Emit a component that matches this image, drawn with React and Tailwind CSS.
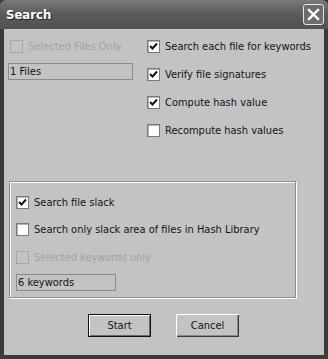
import React from "react";

function Box({ checked, disabled }) {
  return (
    <span
      className={
        "relative inline-block w-[13px] h-[13px] shrink-0 border " +
        (disabled
          ? "border-[#a6a6a6] bg-[#c3c3c3]"
          : "border-[#7a7a7a] bg-white shadow-[inset_1px_1px_0_#b5b5b5]")
      }
    >
      {checked && (
        <svg className="absolute left-[1px] top-[1px]" width="9" height="9" viewBox="0 0 9 9">
          <path d="M1 4 L3.5 6.5 L8 1.5" fill="none" stroke="#111" strokeWidth="1.9" />
        </svg>
      )}
    </span>
  );
}

function Check({ label, checked, disabled }) {
  return (
    <div className="flex items-center gap-[5px]">
      <Box checked={checked} disabled={disabled} />
      <span className={disabled ? "text-[#a2a2a2]" : "text-[#141414]"}>{label}</span>
    </div>
  );
}

export default function App() {
  return (
    <div
      className="w-[328px] h-[359px] bg-[#3a3a3a] flex flex-col overflow-hidden text-[11px] leading-none font-stretch-condensed"
      style={{ fontFamily: "'DejaVu Sans Condensed', 'DejaVu Sans', sans-serif" }}
    >
      {/* title bar */}
      <div className="h-[29px] shrink-0 flex items-center justify-between pl-[6px] pr-[4px] bg-gradient-to-b from-[#7a7a7a] via-[#5a5a5a] to-[#525252] rounded-t-[6px]">
        <span className="text-white font-bold text-[13px] [text-shadow:1px_1px_0_#222]">Search</span>
        <div className="w-[21px] h-[21px] border border-[#e8e8e8] rounded-[3px] bg-[#6c6c6c] flex items-center justify-center">
          <svg width="13" height="13" viewBox="0 0 13 13">
            <path d="M2 2 L11 11 M11 2 L2 11" stroke="#fff" strokeWidth="2.4" strokeLinecap="square" />
          </svg>
        </div>
      </div>
      {/* body */}
      <div className="flex-1 mx-[4px] mb-[4px] bg-[#c3c3c3] flex flex-col">
        {/* top section */}
        <div className="flex pt-[3px]">
          <div className="w-[125px] ml-[4px] flex flex-col">
            <div className="h-[28px] flex items-center pl-[2px]">
              <Check label="Selected Files Only" disabled />
            </div>
            <div className="mt-[3px] h-[17px] border border-[#8c8c8c] flex items-center pl-[1px] text-[#141414]">
              1 Files
            </div>
          </div>
          <div className="ml-[14px] flex flex-col">
            <div className="h-[28px] flex items-center">
              <Check label="Search each file for keywords" checked />
            </div>
            <div className="h-[28px] flex items-center">
              <Check label="Verify file signatures" checked />
            </div>
            <div className="h-[28px] flex items-center">
              <Check label="Compute hash value" checked />
            </div>
            <div className="h-[28px] flex items-center">
              <Check label="Recompute hash values" />
            </div>
          </div>
        </div>
        {/* group box */}
        <div className="ml-[5px] mt-[37px] w-[287px] h-[117px] border border-[#8e8e8e] shadow-[inset_1px_1px_0_#fff,1px_1px_0_#fff] flex flex-col px-[6px] pt-[6px]">
          <div className="h-[28px] flex items-center">
            <Check label="Search file slack" checked />
          </div>
          <div className="h-[27px] flex items-center">
            <Check label="Search only slack area of files in Hash Library" />
          </div>
          <div className="h-[28px] flex items-center">
            <Check label="Selected keywords only" disabled />
          </div>
          <div className="mt-[3px] w-[100px] h-[17px] border border-[#8c8c8c] flex items-center pl-[1px] text-[#141414]">
            6 keywords
          </div>
        </div>
        {/* buttons */}
        <div className="flex ml-[84px] mt-[16px] gap-[25px]">
          <button className="w-[63px] h-[23px] border border-[#111] bg-[#c3c3c3] shadow-[inset_1px_1px_0_#fff,inset_-1px_-1px_0_#6a6a6a] text-[#141414] text-[11px]">
            Start
          </button>
          <button className="w-[63px] h-[23px] bg-[#c3c3c3] shadow-[inset_1px_1px_0_#fff,inset_-1px_-1px_0_#3a3a3a,inset_-2px_-2px_0_#8a8a8a] text-[#141414] text-[11px]">
            Cancel
          </button>
        </div>
      </div>
    </div>
  );
}
